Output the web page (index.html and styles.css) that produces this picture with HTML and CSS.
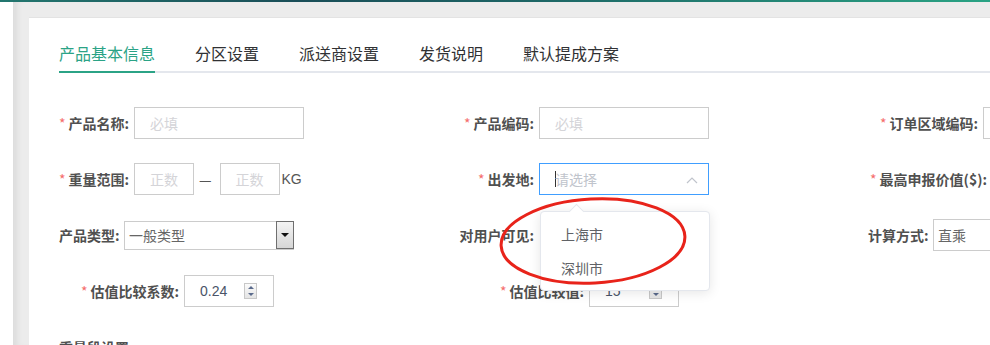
FILE: index.html
```html
<!DOCTYPE html>
<html lang="zh-CN">
<head>
  <meta charset="UTF-8" />
  <meta name="viewport" content="width=device-width, initial-scale=1.0"/>
  <title>产品基本信息</title>
  <link rel="stylesheet" href="styles.css">
</head>
<body>
  <div class="topbar"></div>

  <div class="layout">
    <aside class="side"></aside>

    <div class="main">
      <div class="card">
        <ul class="tabs">
          <li class="active">产品基本信息</li>
          <li>分区设置</li>
          <li>派送商设置</li>
          <li>发货说明</li>
          <li>默认提成方案</li>
        </ul>

        <form class="form">
          <!-- Row 1 -->
          <div class="row">
            <div class="item">
              <label class="label w75"><i>*</i>产品名称:</label>
              <input class="input w170" placeholder="必填" readonly>
            </div>
            <div class="item">
              <label class="label w80"><i>*</i>产品编码:</label>
              <input class="input w170" placeholder="必填" readonly>
            </div>
            <div class="item">
              <label class="label w115"><i>*</i>订单区域编码:</label>
              <input class="input w170" readonly>
            </div>
          </div>

          <!-- Row 2 -->
          <div class="row">
            <div class="item">
              <label class="label w75"><i>*</i>重量范围:</label>
              <input class="input w60 center" placeholder="正数" readonly>
              <span class="dash">—</span>
              <input class="input w60 center" placeholder="正数" readonly>
              <span class="unit">KG</span>
            </div>
            <div class="item">
              <label class="label w80"><i>*</i>出发地:</label>
              <div class="picker w170">
                <span class="caret"></span>
                <span class="placeholder">请选择</span>
                <svg class="chevron" width="12" height="8" viewBox="0 0 12 8">
                  <path d="M1 7 L6 2 L11 7" fill="none" stroke="#c0c4cc" stroke-width="1.2"/>
                </svg>
                <ul class="popover">
                  <li>上海市</li>
                  <li>深圳市</li>
                </ul>
              </div>
            </div>
            <div class="item">
              <label class="label w124"><i>*</i>最高申报价值($):</label>
              <input class="input w170" readonly>
            </div>
          </div>

          <!-- Row 3 -->
          <div class="row">
            <div class="item">
              <label class="label w65 left">产品类型:</label>
              <div class="select w170">
                <span>一般类型</span>
                <span class="select-btn"><b></b></span>
              </div>
            </div>
            <div class="item">
              <label class="label w80">对用户可见:</label>
            </div>
            <div class="item">
              <label class="label w65">计算方式:</label>
              <input class="input w170 value" value="直乘" readonly>
            </div>
          </div>

          <!-- Row 4 -->
          <div class="row">
            <div class="item">
              <label class="label w125"><i>*</i>估值比较系数:</label>
              <div class="number w90">
                <span>0.24</span>
                <span class="spin"><b class="up"></b><b class="down"></b></span>
              </div>
            </div>
            <div class="item">
              <label class="label w130"><i>*</i>估值比较值:</label>
              <div class="number w90">
                <span>15</span>
                <span class="spin"><b class="up"></b><b class="down"></b></span>
              </div>
            </div>
          </div>

          <!-- Row 5 -->
          <div class="row">
            <div class="item">
              <label class="label left">重量段设置:</label>
            </div>
          </div>
        </form>
      </div>
    </div>
  </div>

  <!-- hand drawn highlight -->
  <svg class="mark" width="990" height="345" viewBox="0 0 990 345">
    <ellipse cx="593" cy="241" rx="92" ry="42" transform="rotate(-3 593 241)"
             fill="none" stroke="#e8231a" stroke-width="3"/>
  </svg>
</body>
</html>
```

FILE: styles.css
```css
* { margin: 0; padding: 0; box-sizing: border-box; }
html, body {
  font-family: "Liberation Sans", "Noto Sans CJK SC", sans-serif;
  font-size: 14px;
  background-color: #fff;
  color: #555;
  overflow: hidden;
}

.topbar {
  height: 2px;
  background: linear-gradient(90deg, #23776f 0%, #1a4e58 30%, #1d6766 55%, #2aa384 100%);
}

.layout {
  display: flex;
  height: 343px;
}

.side {
  width: 13px;
  flex-shrink: 0;
  background-color: #fff;
}

.main {
  flex: 1;
  min-width: 0;
  background-color: #ececec;
  padding: 15px 0 0 16px;
  box-shadow: inset 8px 0 6px -4px rgba(0, 0, 0, 0.07);
}

.card {
  background-color: #fff;
  height: 100%;
  padding: 0 0 0 30px;
  border-top: 1px solid #e3e3e3;
  overflow: hidden;
}

/* Tabs */
.tabs {
  display: flex;
  gap: 40px;
  list-style: none;
  padding-top: 23px;
  border-bottom: 2px solid #e4e7ed;
  width: 1000px;
}

.tabs li {
  font-family: "Noto Sans CJK SC", sans-serif;
  font-size: 16px;
  line-height: 24px;
  padding-bottom: 6px;
  margin-bottom: -2px;
  color: #303133;
  border-bottom: 2px solid transparent;
}

.tabs li.active {
  color: #2ba386;
  border-bottom-color: #2ba386;
}

/* Form */
.form {
  margin-top: 34px;
}

.row {
  display: grid;
  grid-template-columns: 400px 409px 400px;
  height: 32px;
  margin-bottom: 24px;
}

.item {
  display: flex;
  align-items: center;
  position: relative;
}

.label {
  font-family: "Noto Sans CJK SC", sans-serif;
  font-weight: bold;
  font-size: 14px;
  color: #505050;
  text-align: right;
  padding-right: 5px;
  line-height: 32px;
  white-space: nowrap;
  flex-shrink: 0;
}

.label i {
  font-style: normal;
  font-weight: normal;
  color: #f56c6c;
  margin-right: 3px;
}

.label.left { text-align: left; }

.w60 { width: 60px; }
.w65 { width: 65px; }
.w75 { width: 75px; }
.w80 { width: 80px; }
.w90 { width: 90px; }
.w115 { width: 115px; }
.w124 { width: 124px; }
.w125 { width: 125px; }
.w130 { width: 130px; }
.w170 { width: 170px; flex-shrink: 0; }

.input {
  height: 32px;
  border: 1px solid #ccc;
  padding: 0 15px;
  font-family: "Noto Sans CJK SC", sans-serif;
  font-size: 14px;
  color: #666;
  outline: none;
  background: #fff;
}

.input::placeholder { color: #d4d4d8; }

.input.center {
  text-align: center;
  padding: 0;
}

.input.value { padding: 0 4px; }

.dash {
  font-family: "Noto Sans CJK SC", sans-serif;
  margin: 0 8px 0 5px;
  color: #555;
}

.unit {
  margin-left: 2px;
  color: #555;
  font-size: 14px;
}

/* focused picker */
.picker {
  position: relative;
  height: 32px;
  border: 1px solid #409eff;
  padding-left: 15px;
  display: flex;
  align-items: center;
  background: #fff;
  font-family: "Noto Sans CJK SC", sans-serif;
}

.caret {
  width: 1px;
  height: 16px;
  background-color: #333;
  margin-right: -1px;
}

.placeholder { color: #c0c4cc; }

.chevron {
  position: absolute;
  right: 10px;
  top: 12px;
}

.popover {
  position: absolute;
  top: 47px;
  left: 0;
  width: 170px;
  list-style: none;
  background: #fff;
  border: 1px solid #e4e7ed;
  border-radius: 4px;
  box-shadow: 0 2px 12px rgba(0, 0, 0, 0.1);
  padding: 5px 0;
  z-index: 5;
}

.popover::before {
  content: '';
  position: absolute;
  top: -6px;
  left: 30px;
  width: 10px;
  height: 10px;
  background: #fff;
  border-left: 1px solid #e4e7ed;
  border-top: 1px solid #e4e7ed;
  transform: rotate(45deg);
}

.popover li {
  height: 34px;
  line-height: 34px;
  padding-left: 20px;
  color: #606266;
  font-size: 14px;
}

/* native looking select */
.select {
  height: 29px;
  border: 1px solid #ccc;
  display: flex;
  align-items: center;
  justify-content: space-between;
  padding-left: 4px;
  font-family: "Noto Sans CJK SC", sans-serif;
  color: #666;
}

.select-btn {
  width: 18px;
  height: 28px;
  border: 1px solid #6f6f6f;
  background: linear-gradient(#f4f4f4, #d6d6d6);
  display: flex;
  align-items: center;
  justify-content: center;
  margin-right: -1px;
}

.select-btn b {
  border-left: 4px solid transparent;
  border-right: 4px solid transparent;
  border-top: 4px solid #111;
}

/* number input */
.number {
  height: 32px;
  border: 1px solid #ccc;
  display: flex;
  align-items: center;
  padding-left: 15px;
  color: #4a5468;
  font-size: 14px;
  flex-shrink: 0;
}

.spin {
  margin-left: auto;
  margin-right: 16px;
  width: 13px;
  height: 16px;
  border: 1px solid #c8c8c8;
  background: linear-gradient(#fbfbfb, #e4e4e4);
  display: flex;
  flex-direction: column;
  align-items: center;
  justify-content: space-around;
}

.spin .up {
  border-left: 3px solid transparent;
  border-right: 3px solid transparent;
  border-bottom: 3px solid #5a6a8c;
}

.spin .down {
  border-left: 3px solid transparent;
  border-right: 3px solid transparent;
  border-top: 3px solid #5a6a8c;
}

.mark {
  position: absolute;
  top: 0;
  left: 0;
  pointer-events: none;
  z-index: 10;
}
```
